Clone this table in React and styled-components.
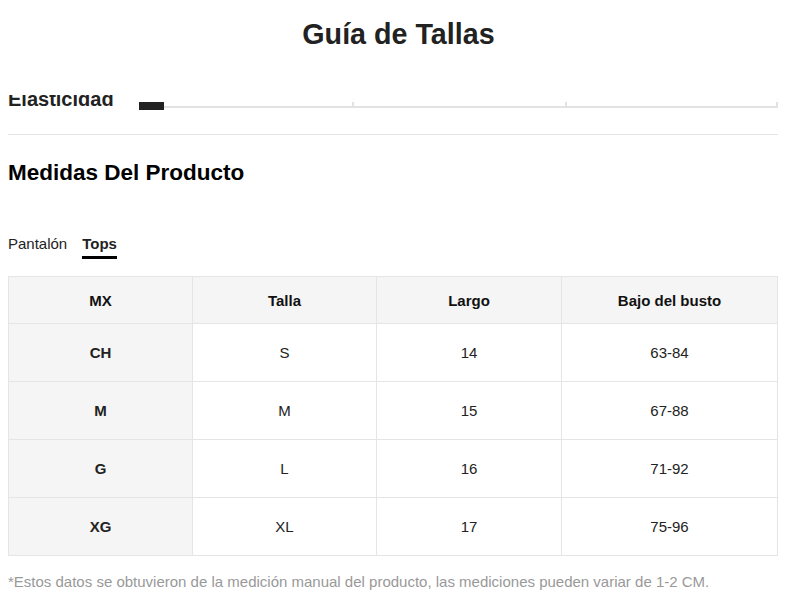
import React, { useLayoutEffect, useRef, useState } from "react";
import styled, { createGlobalStyle } from "styled-components";

const GlobalStyle = createGlobalStyle`
  html, body {
    margin: 0;
    padding: 0;
    background: #fff;
    font-family: "Liberation Sans", Arial, sans-serif;
    color: #222;
  }
  * { box-sizing: border-box; }
`;

const tabs = {
  pantalon: { label: "Pantalón" },
  tops: { label: "Tops" },
};

const columns = ["MX", "Talla", "Largo", "Bajo del busto"];

const rows = [
  ["CH", "S", "14", "63-84"],
  ["M", "M", "15", "67-88"],
  ["G", "L", "16", "71-92"],
  ["XG", "XL", "17", "75-96"],
];

const App = () => {
  const [activeTab, setActiveTab] = useState("tops");
  const scrollRef = useRef(null);

  useLayoutEffect(() => {
    if (scrollRef.current) scrollRef.current.scrollTop = 8;
  }, []);

  return (
    <Page>
      <GlobalStyle />
      <Header>
        <Title>Guía de Tallas</Title>
      </Header>

      <Scroll ref={scrollRef}>
        <Content>
          <FitRow>
            <FitLabel>Elasticidad</FitLabel>
            <Track>
              <TrackLine />
              <Tick style={{ left: "33.3%" }} />
              <Tick style={{ left: "66.6%" }} />
              <Tick style={{ left: "calc(100% - 2px)" }} />
              <Indicator />
            </Track>
          </FitRow>

          <Divider />

          <SectionTitle>Medidas Del Producto</SectionTitle>

          <Tabs>
            {Object.keys(tabs).map((id) => (
              <Tab
                key={id}
                $active={activeTab === id}
                onClick={() => setActiveTab(id)}
              >
                {tabs[id].label}
              </Tab>
            ))}
          </Tabs>

          <Table>
            <colgroup>
              <col style={{ width: "184px" }} />
              <col style={{ width: "184px" }} />
              <col style={{ width: "185px" }} />
              <col />
            </colgroup>
            <thead>
              <tr>
                {columns.map((c) => (
                  <HeadCell key={c}>{c}</HeadCell>
                ))}
              </tr>
            </thead>
            <tbody>
              {rows.map((row) => (
                <tr key={row[0]}>
                  {row.map((value, i) => (
                    <Cell key={i} $first={i === 0}>
                      {value}
                    </Cell>
                  ))}
                </tr>
              ))}
            </tbody>
          </Table>

          <Note>
            *Estos datos se obtuvieron de la medición manual del producto, las
            mediciones pueden variar de 1-2 CM.
          </Note>
        </Content>
      </Scroll>
    </Page>
  );
};

const Page = styled.div`
  height: 100vh;
  display: flex;
  flex-direction: column;
  overflow: hidden;
`;
const Header = styled.header`
  flex: 0 0 95px;
  padding-top: 18px;
  padding-left: 8px;
  text-align: center;
`;
const Title = styled.h1`
  margin: 0;
  font-size: 28.7px;
  line-height: 32px;
  font-weight: 700;
  color: #222;
`;
const Scroll = styled.div`
  flex: 1;
  overflow-y: auto;
  scrollbar-width: none;
  &::-webkit-scrollbar {
    display: none;
  }
`;
const Content = styled.div`
  padding: 0 11px 40px 8px;
`;
const FitRow = styled.div`
  display: flex;
  align-items: flex-end;
`;
const FitLabel = styled.div`
  flex: 0 0 131px;
  font-size: 20px;
  line-height: 24px;
  font-weight: 700;
  color: #222;
`;
const Track = styled.div`
  position: relative;
  flex: 1;
  height: 8px;
  margin-bottom: 1px;
`;
const TrackLine = styled.div`
  position: absolute;
  left: 0;
  right: 0;
  top: 4px;
  height: 2px;
  background: #e2e2e2;
`;
const Tick = styled.div`
  position: absolute;
  top: 0;
  width: 2px;
  height: 6px;
  background: #e2e2e2;
`;
const Indicator = styled.div`
  position: absolute;
  left: 0;
  top: 0;
  width: 25px;
  height: 8px;
  background: #222;
`;
const Divider = styled.hr`
  margin: 23px 0 0;
  border: 0;
  border-top: 1px solid #e5e5e5;
`;
const SectionTitle = styled.h2`
  margin: 24px 0 0;
  font-size: 22.5px;
  line-height: 28px;
  font-weight: 700;
  color: #000;
`;
const Tabs = styled.div`
  display: flex;
  gap: 15px;
  margin-top: 47px;
`;
const Tab = styled.button`
  border: 0;
  background: none;
  padding: 0 0 2px;
  font-family: inherit;
  font-size: 15px;
  line-height: 20px;
  font-weight: ${(p) => (p.$active ? 700 : 400)};
  color: #222;
  border-bottom: 3px solid ${(p) => (p.$active ? "#000" : "transparent")};
  cursor: pointer;
`;
const Table = styled.table`
  width: 100%;
  margin-top: 17px;
  border-collapse: collapse;
  table-layout: fixed;
  font-size: 15px;
`;
const HeadCell = styled.th`
  height: 47px;
  padding: 0;
  border: 1px solid #e5e5e5;
  background: #f5f5f5;
  font-weight: 700;
  color: #111;
  text-align: center;
`;
const Cell = styled.td`
  height: 58px;
  padding: 0;
  border: 1px solid #e5e5e5;
  background: ${(p) => (p.$first ? "#f5f5f5" : "#fff")};
  font-weight: ${(p) => (p.$first ? 700 : 400)};
  color: #222;
  text-align: center;
`;
const Note = styled.p`
  margin: 16px 0 0;
  font-size: 15px;
  line-height: 20px;
  color: #999;
`;

export default App;
